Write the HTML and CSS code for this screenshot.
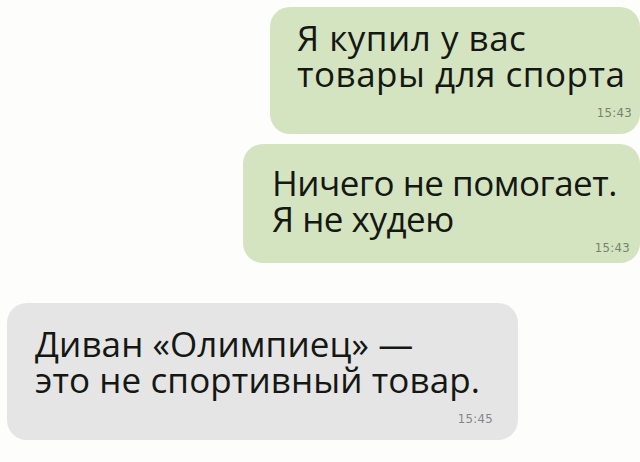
FILE: index.html
```html
<!DOCTYPE html>
<html lang="ru">
<head>
    <meta charset="UTF-8">
    <meta name="viewport" content="width=device-width, initial-scale=1.0">
    <title>Чат</title>
    <link rel="stylesheet" href="styles.css">
</head>
<body>
    <div class="chat">
        <div class="message out first">
            <div class="text">Я купил у вас<br>товары для спорта</div>
            <div class="time">15:43</div>
        </div>

        <div class="message out second">
            <div class="text">Ничего не помогает.<br>Я не худею</div>
            <div class="time">15:43</div>
        </div>

        <div class="message in third">
            <div class="text">Диван «Олимпиец» —<br>это не спортивный товар.</div>
            <div class="time">15:45</div>
        </div>
    </div>
</body>
</html>
```

FILE: styles.css
```css
body {
    margin: 0;
    padding: 0;
    background: #fdfdfb;
    font-family: 'Open Sans', 'Noto Sans', sans-serif;
    width: 640px;
    height: 462px;
    overflow: hidden;
}

.chat {
    display: flex;
    flex-direction: column;
    padding: 7px 0 0 7px;
}

.message {
    box-sizing: border-box;
    border-radius: 20px;
    color: #141712;
}

.message .text {
    font-size: 35px;
    line-height: 36px;
    letter-spacing: 0.1px;
    white-space: nowrap;
}

.message .time {
    font-family: 'DejaVu Sans Condensed', 'Liberation Sans', sans-serif;
    font-size: 13px;
    line-height: 14px;
    letter-spacing: 0.3px;
    text-align: right;
}

.message.out {
    align-self: flex-end;
    background: #d4e4c0;
}

.message.out .time {
    color: #74846a;
}

.message.in {
    align-self: flex-start;
    background: #e5e5e5;
}

.message.in .time {
    color: #868686;
}

.first {
    width: 370px;
    height: 127px;
    padding: 13px 8px 0 27px;
}

.first .text {
    letter-spacing: 0.5px;
}

.first .time {
    margin-top: 14px;
}

.second {
    width: 397px;
    height: 119px;
    margin-top: 10px;
    padding: 21px 10px 0 29px;
}

.second .text {
    letter-spacing: -0.5px;
}

.second .time {
    margin-top: 4px;
}

.third {
    width: 511px;
    height: 137px;
    margin-top: 40px;
    padding: 23px 25px 0 28px;
}

.third .time {
    margin-top: 14px;
}
```
